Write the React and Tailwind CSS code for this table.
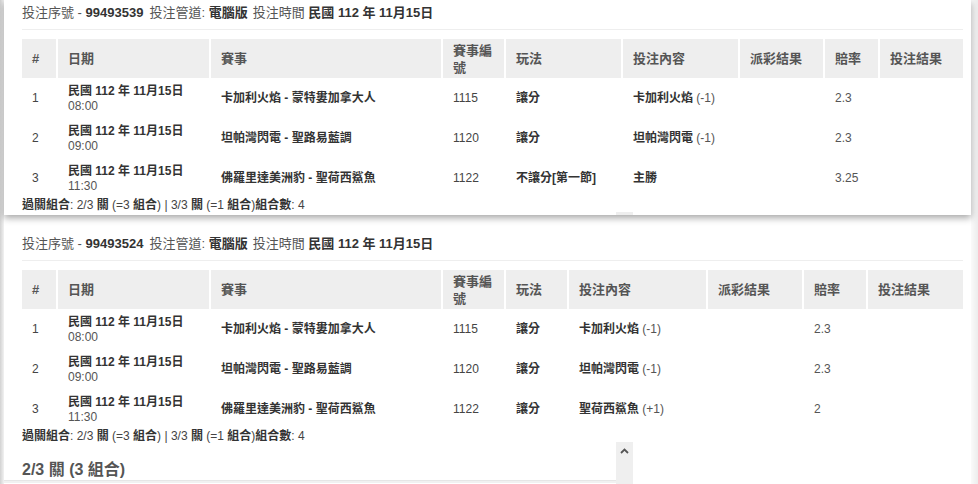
import React from "react";

const COLS1 = "grid-cols-[34px_153px_232px_63px_117px_117px_85px_55px_85px]";
const COLS2 = "grid-cols-[34px_153px_232px_63px_63px_139px_96px_64px_97px]";

const HEAD = ["#", "日期", "賽事", "賽事編號", "玩法", "投注內容", "派彩結果", "賠率", "投注結果"];

const rows1 = [
  { n: "1", time: "08:00", match: "卡加利火焰 - 蒙特婁加拿大人", id: "1115", play: "讓分", pick: "卡加利火焰", hc: "(-1)", odds: "2.3" },
  { n: "2", time: "09:00", match: "坦帕灣閃電 - 聖路易藍調", id: "1120", play: "讓分", pick: "坦帕灣閃電", hc: "(-1)", odds: "2.3" },
  { n: "3", time: "11:30", match: "佛羅里達美洲豹 - 聖荷西鯊魚", id: "1122", play: "不讓分[第一節]", pick: "主勝", hc: "", odds: "3.25" },
];
const rows2 = [
  { n: "1", time: "08:00", match: "卡加利火焰 - 蒙特婁加拿大人", id: "1115", play: "讓分", pick: "卡加利火焰", hc: "(-1)", odds: "2.3" },
  { n: "2", time: "09:00", match: "坦帕灣閃電 - 聖路易藍調", id: "1120", play: "讓分", pick: "坦帕灣閃電", hc: "(-1)", odds: "2.3" },
  { n: "3", time: "11:30", match: "佛羅里達美洲豹 - 聖荷西鯊魚", id: "1122", play: "讓分", pick: "聖荷西鯊魚", hc: "(+1)", odds: "2" },
];

function Mixed({ t }) {
  const parts = t.split(/([\u3000-\u9fff\uff00-\uffef]+)/);
  return (
    <>
      {parts.map((p, i) =>
        /[\u3000-\u9fff\uff00-\uffef]/.test(p) ? (
          <span key={i} className="font-bold text-[#333]">{p}</span>
        ) : (
          <span key={i}>{p}</span>
        )
      )}
    </>
  );
}

function BetHeader({ serial }) {
  return (
    <div className="text-[13px] leading-[17px] text-[#555] pb-[8px] border-b border-[#eeeeee] whitespace-nowrap">
      投注序號 - <span className="font-bold text-[#333]">{serial}</span>
      <span className="ml-[6px]">投注管道: </span>
      <span className="font-bold text-[#333]">電腦版</span>
      <span className="ml-[5px]">投注時間 </span>
      <span className="font-bold text-[#333]">民國 112 年 11月15日</span>
    </div>
  );
}

function BetTable({ cols, rows }) {
  return (
    <div className="mt-[9px] w-[941px]">
      <div className={`grid ${cols} h-[39px] text-[13px] font-bold text-[#555]`}>
        {HEAD.map((h, i) => (
          <div
            key={h}
            className={
              i === 0
                ? "bg-[#eeeeee] px-[10px] flex items-center leading-[17px]"
                : "bg-[#eeeeee] border-l-2 border-white px-[10px] flex items-center leading-[17px]"
            }
          >
            {h}
          </div>
        ))}
      </div>
      {rows.map((r) => (
        <div key={r.n} className={`grid ${cols} h-[40px] text-[12px] text-[#555] items-center`}>
          <div className="px-[10px] text-[#444]">{r.n}</div>
          <div className="pl-[12px] pr-[10px] leading-[15px] pt-[1px]">
            <div className="font-bold text-[#333] whitespace-nowrap">民國 112 年 11月15日</div>
            <div className="text-[#555]">{r.time}</div>
          </div>
          <div className="pl-[12px] pr-[10px] font-bold text-[#333] whitespace-nowrap">{r.match}</div>
          <div className="pl-[12px] pr-[10px] text-[#444]">{r.id}</div>
          <div className="pl-[12px] pr-[10px] font-bold text-[#333] whitespace-nowrap">{r.play}</div>
          <div className="pl-[12px] pr-[10px] whitespace-nowrap">
            <span className="font-bold text-[#333]">{r.pick}</span>
            {r.hc ? <span className="text-[#555]"> {r.hc}</span> : null}
          </div>
          <div className="pl-[12px] pr-[10px]"></div>
          <div className="pl-[12px] pr-[10px] text-[#555]">{r.odds}</div>
          <div className="pl-[12px] pr-[10px]"></div>
        </div>
      ))}
    </div>
  );
}

function Summary() {
  return (
    <div className="text-[12px] leading-[14px] text-[#444] whitespace-nowrap">
      <Mixed t="過關組合: 2/3 關 (=3 組合) | 3/3 關 (=1 組合)組合數: 4" />
    </div>
  );
}

export default function App() {
  return (
    <div className="h-[484px] w-[978px] overflow-hidden bg-white flex font-['Liberation_Sans','Noto_Sans_CJK_TC',sans-serif]">
      <div className="w-[4px] shrink-0 bg-gradient-to-r from-[#d2d2d2] to-[#f2f2f2]"></div>
      <div className="w-[967px] shrink-0 flex flex-col">
        <div className="relative z-10 bg-white pl-[18px] pr-[8px] pt-[4px] pb-[3px] shadow-[0_3px_7px_rgba(0,0,0,0.35)]">
          <BetHeader serial="99493539" />
          <BetTable cols={COLS1} rows={rows1} />
          <Summary />
          <div className="absolute left-[612px] bottom-0 w-[17px] h-[3px] bg-[#eeeeee]"></div>
        </div>
        <div className="relative flex-1 bg-white pl-[18px] pr-[8px] pt-[20px]">
          <BetHeader serial="99493524" />
          <BetTable cols={COLS2} rows={rows2} />
          <Summary />
          <div className="mt-[17px] text-[16px] leading-[20px] font-bold text-[#555] whitespace-nowrap">
            2/3 關 (3 組合)
          </div>
          <div className="absolute left-0 w-[612px] top-[265px] h-[3px] bg-[#f1f1f1] border-t border-[#e6e6e6]"></div>
          <div className="absolute left-[612px] top-[227px] w-[17px] h-[50px] bg-[#efefef] flex justify-center pt-[6px]">
            <svg width="9" height="6" viewBox="0 0 9 6">
              <polyline points="1,5 4.5,1.5 8,5" fill="none" stroke="#555" strokeWidth="1.8" />
            </svg>
          </div>
        </div>
      </div>
      <div className="w-[7px] shrink-0 bg-gradient-to-r from-[#fafafa] to-[#ececec]"></div>
    </div>
  );
}
